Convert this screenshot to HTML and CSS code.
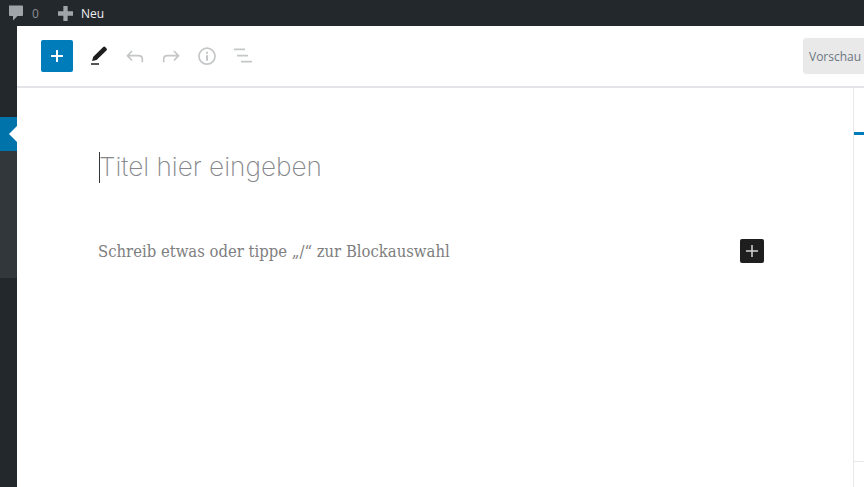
FILE: index.html
```html
<!DOCTYPE html>
<html lang="de">
<head>
<meta charset="utf-8">
<title>Beitrag erstellen</title>
<link rel="stylesheet" href="styles.css">
</head>
<body>
<header class="adminbar">
  <svg class="bar-comment" viewBox="0 0 16 16" width="16" height="16"><path d="M1 .5h13q1 0 1 1V10q0 1-1 1H9.500L5 15.500V11H2q-1 0-1-1z" fill="#a0a5aa"/></svg>
  <span class="bar-count">0</span>
  <svg class="bar-plus" viewBox="0 0 14 14" width="14" height="14"><path d="M5 0h4v5h5v4H9v5H5V9H0V5h5z" fill="#a0a5aa"/></svg>
  <span class="bar-new">Neu</span>
</header>
<div class="shell">
  <nav class="sidemenu">
    <div class="menu-top"></div>
    <div class="menu-current"><span class="menu-arrow"></span></div>
    <div class="menu-sub"></div>
  </nav>
  <main class="editor">
    <div class="toolbar">
      <div class="tools">
        <button class="add-btn" aria-label="Block hinzufügen"><svg viewBox="0 0 14 14" width="14" height="14"><path d="M6 1h2v5h5v2H8v5H6V8H1V6h5z" fill="#fff"/></svg></button>
        <svg class="tool" viewBox="0 0 24 24" width="24" height="24"><path d="M5 17l1.300-4.300L16 3.200q1.200-1.200 2.400 0l1 1q1.200 1.200 0 2.400L9.600 16z" fill="#1e1e1e"/><rect x="4" y="19" width="8" height="2" fill="#555"/></svg>
        <svg class="tool" viewBox="0 0 24 24" width="24" height="24"><path d="M9 7 4.500 11.700 9 16.500M5 11.700h10.500q3.800 0 3.800 3.500v3" fill="none" stroke="#c4c6c8" stroke-width="1.700"/></svg>
        <svg class="tool" viewBox="0 0 24 24" width="24" height="24"><path d="M15 7l4.500 4.700L15 16.500M19 11.700H8.500Q4.700 11.700 4.700 15.200v3" fill="none" stroke="#c4c6c8" stroke-width="1.700"/></svg>
        <svg class="tool" viewBox="0 0 24 24" width="24" height="24"><circle cx="12" cy="12.200" r="8" fill="none" stroke="#c4c6c8" stroke-width="1.700"/><path d="M11 7.700h2v2h-2zM11 11.200h2v5.500h-2z" fill="#c4c6c8"/></svg>
        <svg class="tool" viewBox="0 0 24 24" width="24" height="24"><path d="M3 5.300h11M6 11.700h11M10 17.700h11" fill="none" stroke="#c4c6c8" stroke-width="1.700"/></svg>
      </div>
      <button class="preview">Vorschau</button>
    </div>
    <div class="workspace">
      <section class="canvas">
        <div class="title-row"><span class="caret"></span><span class="title">Titel hier eingeben</span></div>
        <div class="block-row">
          <p class="placeholder">Schreib etwas oder tippe „/“ zur Blockauswahl</p>
          <button class="inline-add" aria-label="Block hinzufügen"><svg viewBox="0 0 14 14" width="14" height="14"><path d="M6.250 1h1.500v5.250H13v1.500H7.750V13h-1.500V7.750H1v-1.500h5.250z" fill="#d6d6d6"/></svg></button>
        </div>
      </section>
      <aside class="settings">
        <div class="tab-line"></div>
        <div class="settings-foot"></div>
      </aside>
    </div>
  </main>
</div>
</body>
</html>
```
FILE: styles.css
```css
* { box-sizing: border-box; }
html, body { margin: 0; height: 100%; overflow: hidden; background: #fff; }
body { display: flex; flex-direction: column; width: 864px; height: 487px; }
button { border: 0; padding: 0; margin: 0; }

.adminbar { height: 26px; flex: none; background: #23282d; display: flex; align-items: center; font: 12px "Open Sans", sans-serif; }
.bar-comment { margin-left: 8px; }
.bar-count { margin-left: 8px; color: #8b8f94; width: 26px; }
.bar-plus { margin-left: 0; width: 15px; height: 15px; }
.bar-new { margin-left: 8px; color: #f0f0f1; }

.shell { flex: 1; display: flex; min-height: 0; }
.sidemenu { width: 17px; flex: none; background: #23282d; display: flex; flex-direction: column; }
.menu-top { height: 91px; }
.menu-current { height: 34px; background: #0073aa; display: flex; align-items: center; justify-content: flex-end; }
.menu-arrow { width: 0; height: 0; border: 8px solid transparent; border-left-width: 0; border-right-color: #fff; }
.menu-sub { height: 127px; background: #32373c; }

.editor { flex: 1; display: flex; flex-direction: column; min-width: 0; background: #fff; }
.toolbar { height: 62px; flex: none; border-bottom: 2px solid #e2e4e7; display: flex; align-items: center; justify-content: space-between; padding: 0 0 0 24px; }
.tools { display: flex; align-items: center; gap: 12px; }
.add-btn { width: 32px; height: 32px; background: #007cba; border-radius: 2px; display: flex; align-items: center; justify-content: center; margin-right: 2px; }
.tool { display: block; }
.preview { width: 61px; height: 36px; background: #e9e9e9; color: #6c7781; border-radius: 3px 0 0 3px; font: 12px "Open Sans", sans-serif; text-align: left; padding-left: 6px; white-space: nowrap; overflow: hidden; }

.workspace { flex: 1; display: flex; min-height: 0; }
.canvas { flex: 1; padding: 63px 0 0 81px; min-width: 0; }
.title-row { display: flex; align-items: center; height: 32px; }
.caret { width: 1px; height: 31px; background: #32373c; margin-left: 1px; }
.title { font: 200 26.200px "Inter", sans-serif; color: #85878b; white-space: nowrap; margin: -2px 0 0 -1px; }
.block-row { display: flex; align-items: center; justify-content: space-between; margin-top: 55px; padding-right: 89px; height: 26px; }
.placeholder { margin: 0; font: 16.500px "DejaVu Serif Condensed", "Liberation Serif", serif; color: #7e7e7e; white-space: nowrap; }
.inline-add { width: 24px; height: 24px; background: #1e1e1e; border-radius: 2px; display: flex; align-items: center; justify-content: center; }

.settings { width: 11px; flex: none; border-left: 1px solid #e8e8e8; display: flex; flex-direction: column; }
.tab-line { height: 3px; background: #007cba; margin-top: 44px; }
.settings-foot { margin-top: auto; height: 26px; border-top: 1px solid #e8e8e8; }
```
